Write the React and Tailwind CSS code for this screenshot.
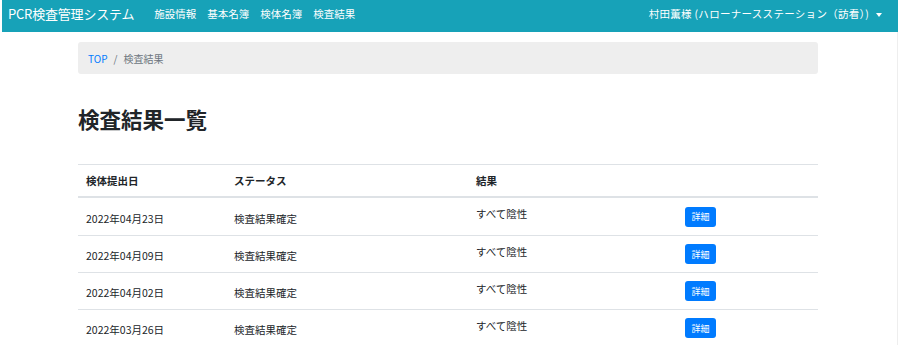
import React from "react"

const rows = [
  { date: "2022年04月23日", status: "検査結果確定", result: "すべて陰性" },
  { date: "2022年04月09日", status: "検査結果確定", result: "すべて陰性" },
  { date: "2022年04月02日", status: "検査結果確定", result: "すべて陰性" },
  { date: "2022年03月26日", status: "検査結果確定", result: "すべて陰性" },
]

const navLinks = ["施設情報", "基本名簿", "検体名簿", "検査結果"]

const App = () => {
  return (
    <div
      className="w-[900px] h-[345px] overflow-hidden bg-white pl-[2px] text-[#212529]"
      style={{ fontFamily: '"Noto Sans CJK JP", "Noto Sans", sans-serif' }}
    >
      <div className="w-[896px] h-full border-r border-[#eeeeee]">
        {/* navbar */}
        <nav className="h-[32px] w-[896px] bg-[#17a2b8] flex items-center justify-between pl-[6px] pr-[16px] pb-[4px] text-white">
          <div className="flex items-center">
            <span className="text-[13px] tracking-[-0.2px]">PCR検査管理システム</span>
            <ul className="flex items-center gap-[11px] ml-[20px] text-[10.5px]">
              {navLinks.map((l) => (
                <li key={l}>{l}</li>
              ))}
            </ul>
          </div>
          <div className="flex items-center text-[10.5px]">
            <span className="tracking-[0.3px]">村田薫様 (ハローナースステーション（訪看）)</span>
            <span className="ml-[7px] mt-[1px] w-0 h-0 border-t-[4px] border-t-white border-x-[3.5px] border-x-transparent" />
          </div>
        </nav>

        <div className="ml-[76px] w-[740px]">
          {/* breadcrumb */}
          <div className="mt-[10px] h-[32px] rounded-[3px] bg-[#eeeeee] flex items-center px-[10px] text-[10px]">
            <a className="text-[#007bff]">TOP</a>
            <span className="mx-[6px] text-[#6c757d]">/</span>
            <span className="text-[#6c757d]">検査結果</span>
          </div>

          <h1 className="mt-[32px] text-[21.5px] leading-[26px] font-bold">検査結果一覧</h1>

          {/* table */}
          <div className="mt-[32px] text-[10.5px]">
            <div className="flex items-center h-[34px] border-t border-[#dee2e6] border-b-2 font-bold">
              <div className="w-[148px] pl-[8px]">検体提出日</div>
              <div className="w-[242px] pl-[8px]">ステータス</div>
              <div className="w-[209px] pl-[8px]">結果</div>
              <div className="flex-1" />
            </div>
            {rows.map((r, i) => (
              <div
                key={i}
                className={`flex items-center h-[37px] ${i > 0 ? "border-t border-[#dee2e6]" : ""}`}
              >
                <div className="w-[148px] pl-[8px] pt-[4px]">{r.date}</div>
                <div className="w-[242px] pl-[8px] pt-[4px]">{r.status}</div>
                <div className="w-[209px] pl-[8px] pb-[5px]">{r.result}</div>
                <div className="flex-1 pl-[8px]">
                  <button className="w-[31px] h-[20px] rounded-[3px] bg-[#007bff] text-white text-[9px] leading-none">
                    詳細
                  </button>
                </div>
              </div>
            ))}
          </div>
        </div>
      </div>
    </div>
  )
}

export default App
